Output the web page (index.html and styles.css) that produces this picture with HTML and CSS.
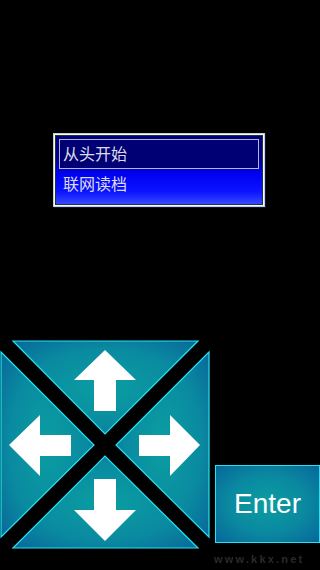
FILE: index.html
```html
<!DOCTYPE html>
<html>
<head>
<meta charset="utf-8">
<link rel="stylesheet" href="styles.css">
</head>
<body>
<div class="screen">
  <div class="menu-wrap">
    <div class="menu">
      <div class="item selected">从头开始</div>
      <div class="item">联网读档</div>
    </div>
  </div>
  <div class="controls">
    <svg class="dpad" width="210" height="210" viewBox="0 0 210 210">
      <defs>
        <radialGradient id="tg" cx="0.5" cy="0.5" r="0.75">
          <stop offset="0" stop-color="#0a9ea2"/>
          <stop offset="0.55" stop-color="#0a8aa0"/>
          <stop offset="1" stop-color="#08639a"/>
        </radialGradient>
      </defs>
      <g fill="url(#tg)" stroke="#22e4f2" stroke-width="1.2">
        <polygon points="13,1 198,1 105,94"/>
        <polygon points="1,12 1,197 94,105"/>
        <polygon points="209,12 209,197 116,105"/>
        <polygon points="13,208 198,208 105,116"/>
      </g>
      <g fill="#ffffff">
        <polygon points="105,10 136,40 116,40 116,71 94,71 94,40 74,40"/>
        <polygon points="9,105 40,75 40,95 71,95 71,116 40,116 40,136"/>
        <polygon points="200,105 170,75 170,95 139,95 139,116 170,116 170,136"/>
        <polygon points="105,201 136,170 116,170 116,139 94,139 94,170 74,170"/>
      </g>
    </svg>
    <div class="enter">Enter</div>
  </div>
  <div class="watermark">www.kkx.net</div>
</div>
</body>
</html>
```
FILE: styles.css
```css
html, body {
  margin: 0;
  padding: 0;
  background: #000;
}
.screen {
  position: relative;
  width: 320px;
  height: 570px;
  background: #000;
  display: flex;
  flex-direction: column;
  overflow: hidden;
}
.menu-wrap {
  padding: 133px 0 0 53px;
}
.menu {
  box-sizing: border-box;
  width: 212px;
  height: 74px;
  border: 1px solid #c8d0c8;
  box-shadow: inset 0 0 0 1px #f4fff4, inset 0 0 0 2px #203040, 1px 1px 0 #101050;
  background: linear-gradient(to bottom, #00007a 0%, #00008a 30%, #0000f0 55%, #0a14ff 80%, #4050ff 100%);
  padding: 5px 5px 0 5px;
  display: flex;
  flex-direction: column;
}
.item {
  box-sizing: border-box;
  height: 30px;
  padding-left: 4px;
  font-family: "Noto Sans CJK SC", "Liberation Sans", sans-serif;
  font-size: 16px;
  line-height: 28px;
  color: #dcdcec;
}
.item.selected {
  border: 1px solid #b8b8c8;
  background: #000074;
  line-height: 26px;
  padding-left: 3px;
}
.controls {
  margin-top: 133px;
  display: flex;
  align-items: flex-end;
}
.dpad {
  display: block;
  flex: none;
}
.enter {
  box-sizing: border-box;
  width: 105px;
  height: 78px;
  margin: 0 0 7px 5px;
  border: 1.5px solid #22e4f2;
  background: radial-gradient(ellipse at 50% 50%, #0a9ea2 0%, #0a88a0 55%, #08669a 100%);
  color: #fff;
  font-family: "Liberation Sans", Arial, sans-serif;
  font-size: 28px;
  display: flex;
  align-items: center;
  justify-content: center;
}
.watermark {
  position: absolute;
  left: 214px;
  top: 553px;
  font-family: "Liberation Sans", Arial, sans-serif;
  font-weight: bold;
  font-size: 11px;
  letter-spacing: 2.2px;
  color: #2a2a2a;
}
```
